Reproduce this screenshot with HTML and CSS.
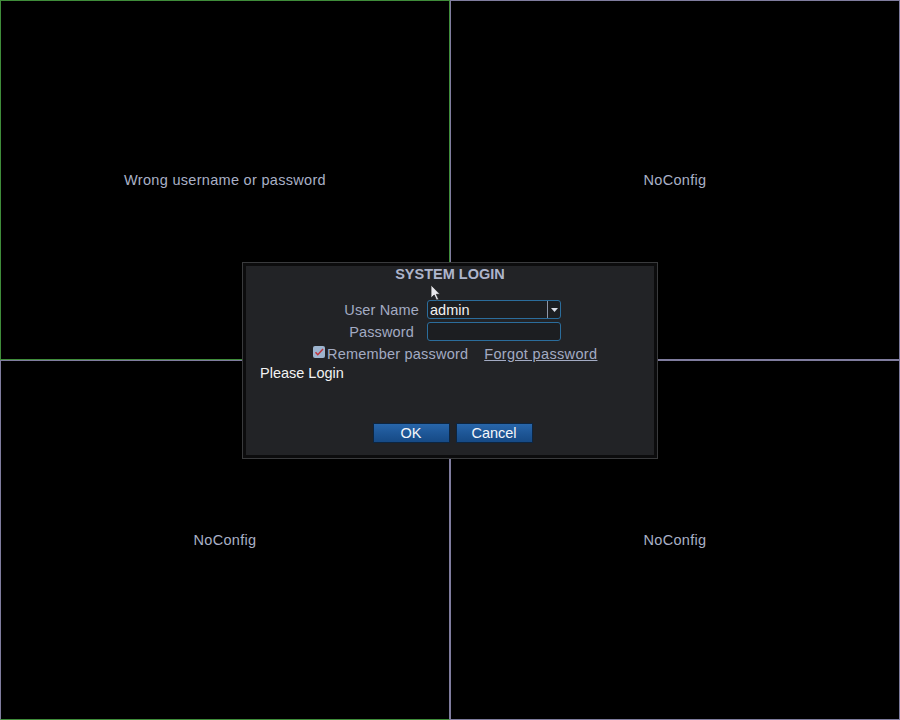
FILE: index.html
```html
<!DOCTYPE html>
<html>
<head>
<meta charset="utf-8">
<link rel="stylesheet" href="styles.css">
</head>
<body>
<div class="screen">
  <div class="cell cell-tl"><span class="msg">Wrong username or password</span></div>
  <div class="cell cell-tr"><span class="msg">NoConfig</span></div>
  <div class="cell cell-bl"><span class="msg">NoConfig</span></div>
  <div class="cell cell-br"><span class="msg">NoConfig</span></div>

  <div class="dialog">
    <div class="panel">
      <div class="title">SYSTEM LOGIN</div>
      <div class="form">
        <div class="row">
          <span class="label">User Name</span>
          <div class="field select"><span class="value">admin</span><span class="arrow"><svg width="7" height="4" viewBox="0 0 7 4"><path d="M0 0h7L3.5 4z" fill="#d8dce6"/></svg></span></div>
        </div>
        <div class="row">
          <span class="label label-pw">Password</span>
          <div class="field"></div>
        </div>
        <div class="row check-row">
          <span class="checkbox"><svg width="12" height="12" viewBox="0 0 12 12"><path d="M2.5 6.2l2.3 2.6L10 3" fill="none" stroke="#c0323a" stroke-width="1.4"/></svg></span>
          <span class="check-label">Remember password</span>
          <span class="forgot">Forgot password</span>
        </div>
      </div>
      <div class="status">Please Login</div>
      <div class="buttons">
        <span class="btn">OK</span>
        <span class="btn">Cancel</span>
      </div>
    </div>
  </div>

  <svg class="cursor" width="12" height="18" viewBox="0 0 12 18"><path d="M1 1v13l3.2-3 2.4 5.2 2-0.9-2.3-5H10z" fill="#e8e8ec" stroke="#222" stroke-width="0.8"/></svg>
</div>
</body>
</html>
```
FILE: styles.css
```css
html, body {
  margin: 0;
  padding: 0;
  background: #000;
}
body {
  font-family: "Liberation Sans", Arial, sans-serif;
}
.screen {
  position: relative;
  width: 900px;
  height: 720px;
  display: grid;
  grid-template-columns: 450px 450px;
  grid-template-rows: 360px 360px;
  overflow: hidden;
}
.cell {
  box-sizing: border-box;
  border: 1px solid #7f7c9e;
  display: flex;
  align-items: center;
  justify-content: center;
}
.cell-tl {
  border-color: #3f8c3a;
}
.cell-bl {
  border-bottom-color: #3f8c3a;
}
.msg {
  color: #a9b0c6;
  font-size: 14.5px;
  letter-spacing: 0.3px;
}
.dialog {
  position: absolute;
  left: 242px;
  top: 262px;
  width: 416px;
  height: 197px;
  box-sizing: border-box;
  border: 1px solid #3a3b3d;
  background: #0c0c0d;
  padding: 3px;
}
.panel {
  height: 100%;
  box-sizing: border-box;
  background: #222326;
  display: flex;
  flex-direction: column;
}
.title {
  text-align: center;
  color: #aeb5cc;
  font-size: 14.5px;
  font-weight: bold;
  height: 16px;
  line-height: 16px;
}
.form {
  margin-top: 18px;
  display: flex;
  flex-direction: column;
  gap: 3px;
}
.row {
  display: flex;
  align-items: center;
  height: 19px;
}
.label {
  width: 173px;
  text-align: right;
  color: #a3abc3;
  font-size: 14.5px;
  letter-spacing: 0.15px;
  margin-right: 8px;
}
.label-pw {
  width: 168px;
  margin-right: 13px;
}
.field {
  width: 134px;
  height: 19px;
  box-sizing: border-box;
  border: 1px solid #2b6d9c;
  border-radius: 3px;
  background: #1c1e21;
  display: flex;
  align-items: center;
}
.select .value {
  flex: 1;
  color: #f2f2f2;
  font-size: 14.5px;
  padding-left: 2px;
}
.select .arrow {
  width: 12px;
  height: 100%;
  border-left: 1px solid #8e97a8;
  display: flex;
  align-items: center;
  justify-content: center;
}
.check-row {
  padding-left: 67px;
}
.checkbox {
  width: 12px;
  height: 12px;
  border-radius: 2px;
  background: #9db4cf;
  display: flex;
  margin-right: 2px;
  margin-top: -3px;
}
.check-label {
  color: #a3abc3;
  font-size: 14.5px;
  letter-spacing: 0.2px;
}
.forgot {
  margin-left: 16px;
  color: #a3abc3;
  font-size: 14.5px;
  text-decoration: underline;
  letter-spacing: 0.35px;
}
.status {
  margin-top: 1px;
  padding-left: 14px;
  color: #f2f2f2;
  font-size: 14.5px;
  height: 18px;
  line-height: 18px;
}
.buttons {
  margin-top: 42px;
  display: flex;
  justify-content: center;
  gap: 8px;
  padding-left: 5px;
}
.btn {
  width: 75px;
  height: 18px;
  line-height: 18px;
  text-align: center;
  color: #f4f6fa;
  font-size: 14.5px;
  background: linear-gradient(#2866aa, #1d5595 55%, #164a85);
  box-shadow: 0 0 0 1px #0d2540;
}
.cursor {
  position: absolute;
  left: 430px;
  top: 284px;
}
```
